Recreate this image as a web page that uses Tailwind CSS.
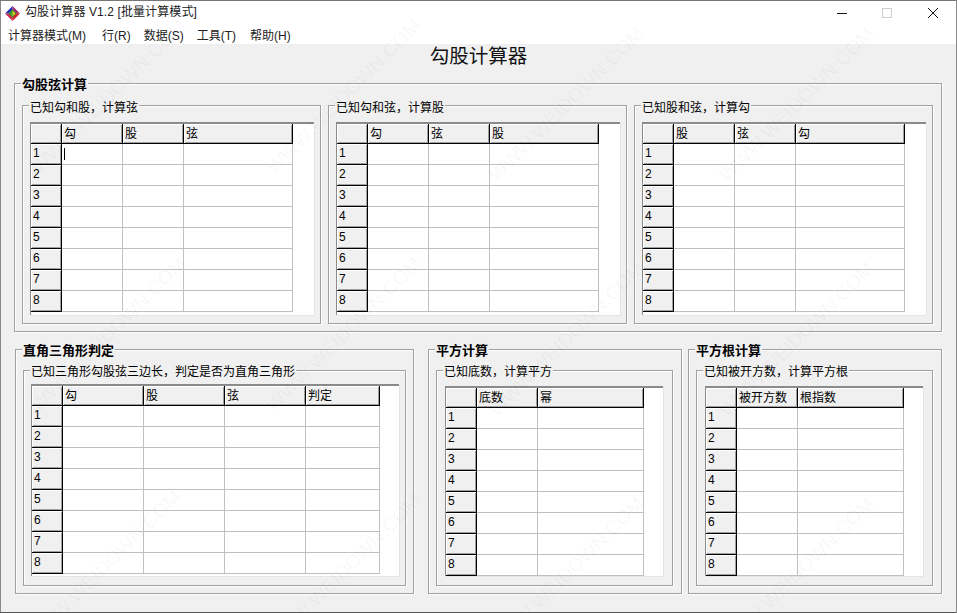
<!DOCTYPE html>
<html>
<head>
<meta charset="utf-8">
<script src="https://cdn.jsdelivr.net/npm/@tailwindcss/browser@4"></script>
</head>
<body class="relative w-[957px] h-[613px] overflow-hidden bg-[#f0f0f0] text-black text-xs font-['Liberation_Sans','Noto_Sans_CJK_SC',sans-serif]">
<div class="h-[22px] bg-white flex items-center pl-[5px]">
  <svg class="mt-[4px]" width="15" height="15" viewBox="0 0 16 16"><polygon points="8,0 0,8 8,8" fill="#2233b8"/><polygon points="8,0 16,8 8,8" fill="#a02a70"/><polygon points="0,8 8,16 8,8" fill="#d02a50"/><polygon points="16,8 8,16 8,8" fill="#d8202c"/><rect x="5" y="5" width="6" height="6" transform="rotate(45 8 8)" fill="#3a9a2a"/><polygon points="8,5 11,8 8,11" fill="#e8d020"/></svg>
  <span class="ml-[5px] mt-[2px] text-[12px] tracking-[0.1px] text-[#222]">勾股计算器 V1.2 [批量计算模式]</span>
  <div class="ml-auto flex items-center h-full">
    <svg width="46" height="22" viewBox="0 0 46 22"><path d="M18 13.5H28" stroke="#111" fill="none"/></svg>
    <svg width="46" height="22" viewBox="0 0 46 22"><rect x="17.5" y="8.5" width="9" height="9" stroke="#ccc" fill="none"/></svg>
    <svg width="46" height="22" viewBox="0 0 46 22"><path d="M17 8L27 18M27 8L17 18" stroke="#111" fill="none"/></svg>
  </div>
</div>
<div class="h-[22px] bg-white flex items-center pl-2 pt-[6px] text-[#222]">
  <span>计算器模式(M)</span><span class="ml-[16px]">行(R)</span><span class="ml-[13px]">数据(S)</span><span class="ml-[13px]">工具(T)</span><span class="ml-[14px]">帮助(H)</span>
</div>
<div class="text-center text-[19.5px] leading-[24px] h-[39px] text-[#111]">勾股计算器</div>

<div class="ml-[14px] w-[928px] h-[249px] relative border border-[#a0a0a0] shadow-[inset_1px_1px_0_white,1px_1px_0_white] pl-[7px] pt-[21px] flex gap-[7px]">
  <div class="absolute left-[6px] top-[-6px] px-[1px] bg-[#f0f0f0] font-bold text-[13px] leading-[14px]">勾股弦计算</div>

  <div class="w-[299px] h-[219px] relative border border-[#a0a0a0] shadow-[inset_1px_1px_0_white,1px_1px_0_white] pl-[7px] pt-[16px]">
    <div class="absolute left-[6px] top-[-5px] px-[1px] bg-[#f0f0f0] leading-[14px]">已知勾和股，计算弦</div>
    <div class="w-[284px] h-[193px] bg-white border-t-2 border-l border-t-[#8a8a8a] border-l-[#8a8a8a] shadow-[1px_1px_0_#e4e4e4]">
      <table class="table-fixed border-separate border-spacing-0 [&_th]:h-[21px] [&_th]:p-0 [&_th]:pl-[2px] [&_th]:text-left [&_th]:font-normal [&_th]:bg-[#f0f0f0] [&_th]:border-r [&_th]:border-b [&_th]:border-black [&_th]:shadow-[inset_1px_1px_0_white,inset_-1px_-1px_0_#a0a0a0] [&_tr+tr_th]:pb-[2px] [&_tr:first-child_th]:h-[20px] [&_td]:h-[21px] [&_td]:p-0 [&_td]:border-r [&_td]:border-b [&_td]:border-[#c0c0c0]">
        <tr><th class="w-[31px]"></th><th class="w-[61px]">勾</th><th class="w-[61px]">股</th><th class="w-[109px]">弦</th></tr>
        <tr><th>1</th><td><div class="ml-[2px] w-px h-[12px] bg-black"></div></td><td></td><td></td></tr>
        <tr><th>2</th><td></td><td></td><td></td></tr>
        <tr><th>3</th><td></td><td></td><td></td></tr>
        <tr><th>4</th><td></td><td></td><td></td></tr>
        <tr><th>5</th><td></td><td></td><td></td></tr>
        <tr><th>6</th><td></td><td></td><td></td></tr>
        <tr><th>7</th><td></td><td></td><td></td></tr>
        <tr><th>8</th><td></td><td></td><td></td></tr>
      </table>
    </div>
  </div>

  <div class="w-[299px] h-[219px] relative border border-[#a0a0a0] shadow-[inset_1px_1px_0_white,1px_1px_0_white] pl-[7px] pt-[16px]">
    <div class="absolute left-[6px] top-[-5px] px-[1px] bg-[#f0f0f0] leading-[14px]">已知勾和弦，计算股</div>
    <div class="w-[284px] h-[193px] bg-white border-t-2 border-l border-t-[#8a8a8a] border-l-[#8a8a8a] shadow-[1px_1px_0_#e4e4e4]">
      <table class="table-fixed border-separate border-spacing-0 [&_th]:h-[21px] [&_th]:p-0 [&_th]:pl-[2px] [&_th]:text-left [&_th]:font-normal [&_th]:bg-[#f0f0f0] [&_th]:border-r [&_th]:border-b [&_th]:border-black [&_th]:shadow-[inset_1px_1px_0_white,inset_-1px_-1px_0_#a0a0a0] [&_tr+tr_th]:pb-[2px] [&_tr:first-child_th]:h-[20px] [&_td]:h-[21px] [&_td]:p-0 [&_td]:border-r [&_td]:border-b [&_td]:border-[#c0c0c0]">
        <tr><th class="w-[31px]"></th><th class="w-[61px]">勾</th><th class="w-[61px]">弦</th><th class="w-[109px]">股</th></tr>
        <tr><th>1</th><td></td><td></td><td></td></tr>
        <tr><th>2</th><td></td><td></td><td></td></tr>
        <tr><th>3</th><td></td><td></td><td></td></tr>
        <tr><th>4</th><td></td><td></td><td></td></tr>
        <tr><th>5</th><td></td><td></td><td></td></tr>
        <tr><th>6</th><td></td><td></td><td></td></tr>
        <tr><th>7</th><td></td><td></td><td></td></tr>
        <tr><th>8</th><td></td><td></td><td></td></tr>
      </table>
    </div>
  </div>

  <div class="w-[299px] h-[219px] relative border border-[#a0a0a0] shadow-[inset_1px_1px_0_white,1px_1px_0_white] pl-[7px] pt-[16px]">
    <div class="absolute left-[6px] top-[-5px] px-[1px] bg-[#f0f0f0] leading-[14px]">已知股和弦，计算勾</div>
    <div class="w-[284px] h-[193px] bg-white border-t-2 border-l border-t-[#8a8a8a] border-l-[#8a8a8a] shadow-[1px_1px_0_#e4e4e4]">
      <table class="table-fixed border-separate border-spacing-0 [&_th]:h-[21px] [&_th]:p-0 [&_th]:pl-[2px] [&_th]:text-left [&_th]:font-normal [&_th]:bg-[#f0f0f0] [&_th]:border-r [&_th]:border-b [&_th]:border-black [&_th]:shadow-[inset_1px_1px_0_white,inset_-1px_-1px_0_#a0a0a0] [&_tr+tr_th]:pb-[2px] [&_tr:first-child_th]:h-[20px] [&_td]:h-[21px] [&_td]:p-0 [&_td]:border-r [&_td]:border-b [&_td]:border-[#c0c0c0]">
        <tr><th class="w-[31px]"></th><th class="w-[61px]">股</th><th class="w-[61px]">弦</th><th class="w-[109px]">勾</th></tr>
        <tr><th>1</th><td></td><td></td><td></td></tr>
        <tr><th>2</th><td></td><td></td><td></td></tr>
        <tr><th>3</th><td></td><td></td><td></td></tr>
        <tr><th>4</th><td></td><td></td><td></td></tr>
        <tr><th>5</th><td></td><td></td><td></td></tr>
        <tr><th>6</th><td></td><td></td><td></td></tr>
        <tr><th>7</th><td></td><td></td><td></td></tr>
        <tr><th>8</th><td></td><td></td><td></td></tr>
      </table>
    </div>
  </div>
</div>

<div class="ml-[15px] mt-[17px] flex">
  <div class="w-[399px] h-[245px] relative border border-[#a0a0a0] shadow-[inset_1px_1px_0_white,1px_1px_0_white] pl-[7px] pt-[20px]">
    <div class="absolute left-[6px] top-[-6px] px-[1px] bg-[#f0f0f0] font-bold text-[13px] leading-[14px]">直角三角形判定</div>
    <div class="w-[383px] h-[216px] relative border border-[#a0a0a0] shadow-[inset_1px_1px_0_white,1px_1px_0_white] pl-[7px] pt-[13px]">
      <div class="absolute left-[6px] top-[-6px] px-[1px] bg-[#f0f0f0] leading-[14px]">已知三角形勾股弦三边长，判定是否为直角三角形</div>
      <div class="w-[368px] h-[192px] bg-white border-t-2 border-l border-t-[#8a8a8a] border-l-[#8a8a8a] shadow-[1px_1px_0_#e4e4e4]">
        <table class="table-fixed border-separate border-spacing-0 [&_th]:h-[21px] [&_th]:p-0 [&_th]:pl-[2px] [&_th]:text-left [&_th]:font-normal [&_th]:bg-[#f0f0f0] [&_th]:border-r [&_th]:border-b [&_th]:border-black [&_th]:shadow-[inset_1px_1px_0_white,inset_-1px_-1px_0_#a0a0a0] [&_tr+tr_th]:pb-[2px] [&_tr:first-child_th]:h-[20px] [&_td]:h-[21px] [&_td]:p-0 [&_td]:border-r [&_td]:border-b [&_td]:border-[#c0c0c0]">
          <tr><th class="w-[31px]"></th><th class="w-[81px]">勾</th><th class="w-[81px]">股</th><th class="w-[81px]">弦</th><th class="w-[74px]">判定</th></tr>
          <tr><th>1</th><td></td><td></td><td></td><td></td></tr>
          <tr><th>2</th><td></td><td></td><td></td><td></td></tr>
          <tr><th>3</th><td></td><td></td><td></td><td></td></tr>
          <tr><th>4</th><td></td><td></td><td></td><td></td></tr>
          <tr><th>5</th><td></td><td></td><td></td><td></td></tr>
          <tr><th>6</th><td></td><td></td><td></td><td></td></tr>
          <tr><th>7</th><td></td><td></td><td></td><td></td></tr>
          <tr><th>8</th><td></td><td></td><td></td><td></td></tr>
        </table>
      </div>
    </div>
  </div>

  <div class="ml-[14px] w-[254px] h-[245px] relative border border-[#a0a0a0] shadow-[inset_1px_1px_0_white,1px_1px_0_white] pl-[7px] pt-[20px]">
    <div class="absolute left-[6px] top-[-6px] px-[1px] bg-[#f0f0f0] font-bold text-[13px] leading-[14px]">平方计算</div>
    <div class="w-[237px] h-[216px] relative border border-[#a0a0a0] shadow-[inset_1px_1px_0_white,1px_1px_0_white] pl-[8px] pt-[15px]">
      <div class="absolute left-[6px] top-[-6px] px-[1px] bg-[#f0f0f0] leading-[14px]">已知底数，计算平方</div>
      <div class="w-[218px] h-[190px] bg-white border-t-2 border-l border-t-[#8a8a8a] border-l-[#8a8a8a] shadow-[1px_1px_0_#e4e4e4]">
        <table class="table-fixed border-separate border-spacing-0 [&_th]:h-[21px] [&_th]:p-0 [&_th]:pl-[2px] [&_th]:text-left [&_th]:font-normal [&_th]:bg-[#f0f0f0] [&_th]:border-r [&_th]:border-b [&_th]:border-black [&_th]:shadow-[inset_1px_1px_0_white,inset_-1px_-1px_0_#a0a0a0] [&_tr+tr_th]:pb-[2px] [&_tr:first-child_th]:h-[20px] [&_td]:h-[21px] [&_td]:p-0 [&_td]:border-r [&_td]:border-b [&_td]:border-[#c0c0c0]">
          <tr><th class="w-[31px]"></th><th class="w-[61px]">底数</th><th class="w-[106px]">幂</th></tr>
          <tr><th>1</th><td></td><td></td></tr>
          <tr><th>2</th><td></td><td></td></tr>
          <tr><th>3</th><td></td><td></td></tr>
          <tr><th>4</th><td></td><td></td></tr>
          <tr><th>5</th><td></td><td></td></tr>
          <tr><th>6</th><td></td><td></td></tr>
          <tr><th>7</th><td></td><td></td></tr>
          <tr><th>8</th><td></td><td></td></tr>
        </table>
      </div>
    </div>
  </div>

  <div class="ml-[6px] w-[254px] h-[245px] relative border border-[#a0a0a0] shadow-[inset_1px_1px_0_white,1px_1px_0_white] pl-[7px] pt-[20px]">
    <div class="absolute left-[6px] top-[-6px] px-[1px] bg-[#f0f0f0] font-bold text-[13px] leading-[14px]">平方根计算</div>
    <div class="w-[237px] h-[216px] relative border border-[#a0a0a0] shadow-[inset_1px_1px_0_white,1px_1px_0_white] pl-[8px] pt-[15px]">
      <div class="absolute left-[6px] top-[-6px] px-[1px] bg-[#f0f0f0] leading-[14px]">已知被开方数，计算平方根</div>
      <div class="w-[218px] h-[190px] bg-white border-t-2 border-l border-t-[#8a8a8a] border-l-[#8a8a8a] shadow-[1px_1px_0_#e4e4e4]">
        <table class="table-fixed border-separate border-spacing-0 [&_th]:h-[21px] [&_th]:p-0 [&_th]:pl-[2px] [&_th]:text-left [&_th]:font-normal [&_th]:bg-[#f0f0f0] [&_th]:border-r [&_th]:border-b [&_th]:border-black [&_th]:shadow-[inset_1px_1px_0_white,inset_-1px_-1px_0_#a0a0a0] [&_tr+tr_th]:pb-[2px] [&_tr:first-child_th]:h-[20px] [&_td]:h-[21px] [&_td]:p-0 [&_td]:border-r [&_td]:border-b [&_td]:border-[#c0c0c0]">
          <tr><th class="w-[31px]"></th><th class="w-[61px]">被开方数</th><th class="w-[106px]">根指数</th></tr>
          <tr><th>1</th><td></td><td></td></tr>
          <tr><th>2</th><td></td><td></td></tr>
          <tr><th>3</th><td></td><td></td></tr>
          <tr><th>4</th><td></td><td></td></tr>
          <tr><th>5</th><td></td><td></td></tr>
          <tr><th>6</th><td></td><td></td></tr>
          <tr><th>7</th><td></td><td></td></tr>
          <tr><th>8</th><td></td><td></td></tr>
        </table>
      </div>
    </div>
  </div>
</div>

<div class="absolute inset-0 overflow-hidden pointer-events-none text-[19.5px] leading-[20px] whitespace-nowrap text-black/[0.035] font-['Liberation_Sans',sans-serif] [&>span]:absolute [&>span]:-translate-x-full [&>span]:-rotate-45 [&>span]:origin-right">
  <span class="left-[182px] top-[12px]">WWW.WEIDOWN.COM</span>
  <span class="left-[417px] top-[12px]">WWW.WEIDOWN.COM</span>
  <span class="left-[640px] top-[20px]">WWW.WEIDOWN.COM</span>
  <span class="left-[870px] top-[20px]">WWW.WEIDOWN.COM</span>
  <span class="left-[182px] top-[250px]">WWW.WEIDOWN.COM</span>
  <span class="left-[417px] top-[250px]">WWW.WEIDOWN.COM</span>
  <span class="left-[640px] top-[255px]">WWW.WEIDOWN.COM</span>
  <span class="left-[870px] top-[255px]">WWW.WEIDOWN.COM</span>
  <span class="left-[177px] top-[483px]">WWW.WEIDOWN.COM</span>
  <span class="left-[417px] top-[487px]">WWW.WEIDOWN.COM</span>
  <span class="left-[640px] top-[490px]">WWW.WEIDOWN.COM</span>
  <span class="left-[870px] top-[490px]">WWW.WEIDOWN.COM</span>
</div>

<div class="absolute left-0 top-0 bottom-0 w-px bg-[#8a8a8a]"></div>
<div class="absolute left-0 right-0 top-0 h-px bg-[#777]"></div>
<div class="absolute left-0 right-0 bottom-0 h-px bg-[#555]"></div>
<div class="absolute right-0 top-0 bottom-0 w-px bg-[#8a8a8a]"></div>
</body>
</html>
